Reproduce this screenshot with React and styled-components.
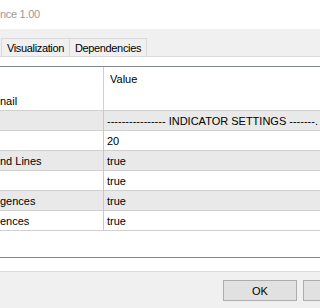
import React from "react";
import styled, { createGlobalStyle } from "styled-components";

const GlobalStyle = createGlobalStyle`
  html, body {
    margin: 0;
    padding: 0;
    background: #f0f0f0;
  }
  body {
    width: 320px;
    height: 308px;
    overflow: hidden;
    font-family: "Liberation Sans", Arial, sans-serif;
  }
`;

const Window = styled.div`
  display: flex;
  flex-direction: column;
  width: 320px;
  height: 308px;
  overflow: hidden;
`;

const TitleBar = styled.div`
  height: 29px;
  background: #ffffff;
  display: flex;
  align-items: center;
  padding-bottom: 1px;
  box-sizing: border-box;
`;

const Title = styled.span`
  font-size: 11px;
  letter-spacing: -0.3px;
  color: #9a9a9a;
  white-space: nowrap;
`;

const Client = styled.div`
  background: #f0f0f0;
  padding-top: 9px;
  display: flex;
  flex-direction: column;
  flex: 1;
`;

const TabStrip = styled.div`
  display: flex;
  height: 18px;
  padding-left: 1px;
`;

const Tab = styled.div`
  width: ${(p) => p.$w}px;
  box-sizing: border-box;
  border-top: 1px solid #d9d9d9;
  border-right: 1px solid #d9d9d9;
  border-left: ${(p) => (p.$first ? "1px solid #d9d9d9" : "none")};
  background: #f0f0f0;
  display: flex;
  align-items: center;
  justify-content: center;
  font-size: 11px;
  letter-spacing: -0.35px;
  color: #000;
  white-space: nowrap;
`;

const TabPage = styled.div`
  background: #ffffff;
  border-top: 1px solid #d9d9d9;
  border-bottom: 1px solid #d9d9d9;
  padding: 9px 0 13px;
`;

const Table = styled.div`
  border-top: 1px solid #828790;
  border-bottom: 1px solid #828790;
  height: 190px;
  display: grid;
  grid-template-columns: 104px 1fr;
  grid-template-rows: 44px;
  grid-auto-rows: 20px;
  align-content: start;
  font-size: 11px;
  color: #000;
  overflow: hidden;
`;

const HeaderCell = styled.div`
  box-sizing: border-box;
  border-bottom: 1px solid #d0d0d0;
  border-right: ${(p) => (p.$name ? "1px solid #d0d0d0" : "none")};
  display: flex;
  align-items: ${(p) => (p.$name ? "flex-end" : "flex-start")};
  padding: ${(p) => (p.$name ? "0 0 3px 0" : "6px 0 0 6px")};
  white-space: nowrap;
  overflow: hidden;
`;

const Cell = styled.div`
  box-sizing: border-box;
  background: ${(p) => (p.$shade ? "#e9e9e9" : "#ffffff")};
  border-bottom: 1px solid #d0d0d0;
  border-right: ${(p) => (p.$name ? "1px solid #c8c8c8" : "none")};
  display: flex;
  align-items: center;
  padding-left: ${(p) => (p.$name ? "0" : "3px")};
  white-space: nowrap;
  overflow: hidden;
`;

const Footer = styled.div`
  flex: 1;
  display: flex;
  justify-content: flex-end;
  align-items: flex-start;
  gap: 6px;
  padding-top: 8px;
  margin-right: -57px;
`;

const Button = styled.button`
  width: 74px;
  height: 21px;
  box-sizing: border-box;
  background: #e1e1e1;
  border: 1px solid #adadad;
  font-family: "Liberation Sans", Arial, sans-serif;
  font-size: 11px;
  color: #000;
  padding: 0;
`;

const rows = [
  { name: "", value: "---------------- INDICATOR SETTINGS -------." },
  { name: "", value: "20" },
  { name: "nd Lines", value: "true" },
  { name: "", value: "true" },
  { name: "gences", value: "true" },
  { name: "ences", value: "true" },
];

export default function App() {
  return (
    <Window>
      <GlobalStyle />
      <TitleBar>
        <Title>nce 1.00</Title>
      </TitleBar>
      <Client>
        <TabStrip>
          <Tab $first $w={69}>Visualization</Tab>
          <Tab $w={77}>Dependencies</Tab>
        </TabStrip>
        <TabPage>
          <Table>
            <HeaderCell $name>nail</HeaderCell>
            <HeaderCell>Value</HeaderCell>
            {rows.map((r, i) => (
              <React.Fragment key={i}>
                <Cell $name $shade={i % 2 === 0}>{r.name}</Cell>
                <Cell $shade={i % 2 === 0}>{r.value}</Cell>
              </React.Fragment>
            ))}
          </Table>
        </TabPage>
        <Footer>
          <Button>OK</Button>
          <Button>Cancel</Button>
        </Footer>
      </Client>
    </Window>
  );
}
